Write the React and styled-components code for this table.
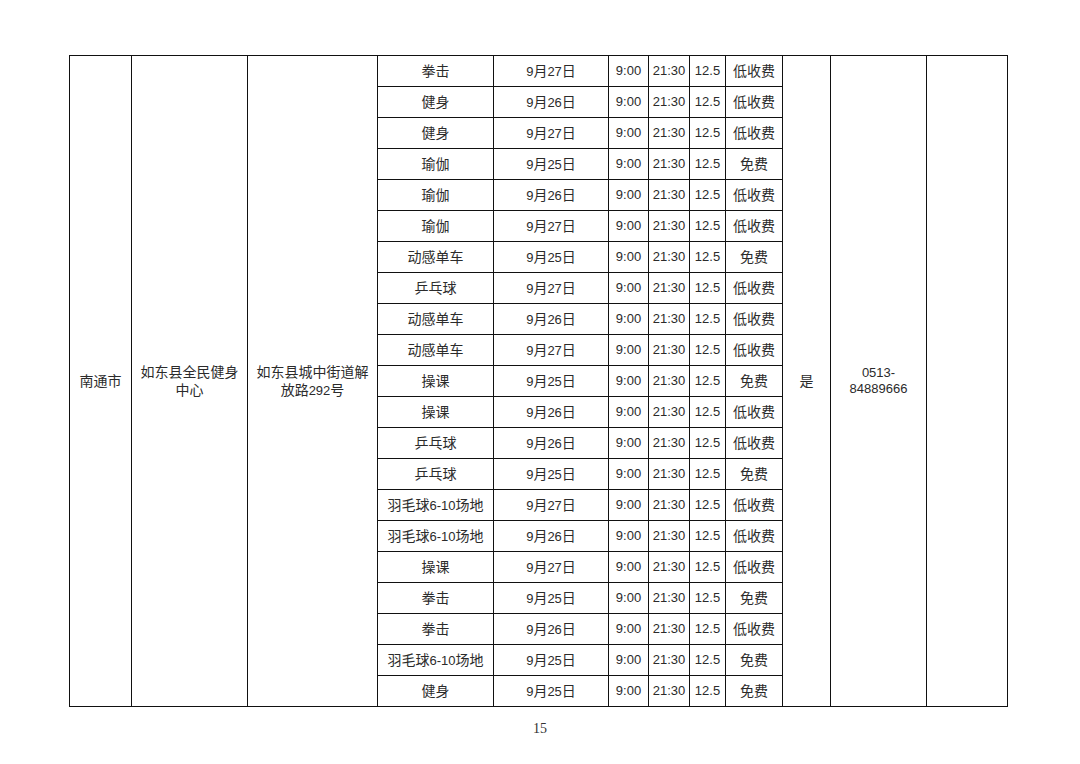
import React from "react";
import styled, { createGlobalStyle } from "styled-components";

const Global = createGlobalStyle`
  html, body { margin: 0; padding: 0; background: #fff; }
  body { width: 1080px; height: 764px; overflow: hidden; }
`;

const Page = styled.div`
  width: 1080px;
  height: 764px;
  padding-top: 55px;
  box-sizing: border-box;
  display: flex;
  flex-direction: column;
  align-items: flex-start;
`;

const Table = styled.table`
  margin-left: 69px;
  border-collapse: collapse;
  table-layout: fixed;
  width: 938px;
  font-family: "Liberation Sans", "Noto Sans CJK SC", sans-serif;
  font-size: 13px;
  color: #2b2b2b;
`;

const Row = styled.tr`
  height: 31px;
`;

const Cell = styled.td`
  border: 1px solid #111;
  padding: 0 2px;
  text-align: center;
  vertical-align: middle;
  line-height: 16px;
  white-space: nowrap;
  overflow: hidden;
`;

const Han = styled.span`
  font-family: "Noto Sans CJK SC", sans-serif;
  font-size: 14px;
`;

const PageNumber = styled.div`
  width: 100%;
  text-align: center;
  margin-top: 14px;
  font-family: "Liberation Serif", serif;
  font-size: 14px;
  color: #333;
`;

function T({ children }) {
  const parts = String(children).split(/([\u4e00-\u9fff]+)/);
  return parts.map((p, i) =>
    /[\u4e00-\u9fff]/.test(p) ? <Han key={i}>{p}</Han> : p ? <React.Fragment key={i}>{p}</React.Fragment> : null
  );
}

const widths = [62, 116, 130, 116, 115, 40, 41, 36, 57, 48, 96, 81];

const rows = [
  ["拳击", "9月27日", "低收费"],
  ["健身", "9月26日", "低收费"],
  ["健身", "9月27日", "低收费"],
  ["瑜伽", "9月25日", "免费"],
  ["瑜伽", "9月26日", "低收费"],
  ["瑜伽", "9月27日", "低收费"],
  ["动感单车", "9月25日", "免费"],
  ["乒乓球", "9月27日", "低收费"],
  ["动感单车", "9月26日", "低收费"],
  ["动感单车", "9月27日", "低收费"],
  ["操课", "9月25日", "免费"],
  ["操课", "9月26日", "低收费"],
  ["乒乓球", "9月26日", "低收费"],
  ["乒乓球", "9月25日", "免费"],
  ["羽毛球6-10场地", "9月27日", "低收费"],
  ["羽毛球6-10场地", "9月26日", "低收费"],
  ["操课", "9月27日", "低收费"],
  ["拳击", "9月25日", "免费"],
  ["拳击", "9月26日", "低收费"],
  ["羽毛球6-10场地", "9月25日", "免费"],
  ["健身", "9月25日", "免费"],
];

export default function App() {
  const n = rows.length;
  return (
    <Page>
      <Global />
      <Table>
        <colgroup>
          {widths.map((w, i) => (
            <col key={i} style={{ width: w }} />
          ))}
        </colgroup>
        <tbody>
          {rows.map((r, i) => (
            <Row key={i}>
              {i === 0 && (
                <>
                  <Cell rowSpan={n}><T>南通市</T></Cell>
                  <Cell rowSpan={n}>
                    <T>如东县全民健身</T>
                    <br />
                    <T>中心</T>
                  </Cell>
                  <Cell rowSpan={n}>
                    <T>如东县城中街道解</T>
                    <br />
                    <T>放路292号</T>
                  </Cell>
                </>
              )}
              <Cell><T>{r[0]}</T></Cell>
              <Cell><T>{r[1]}</T></Cell>
              <Cell>9:00</Cell>
              <Cell>21:30</Cell>
              <Cell>12.5</Cell>
              <Cell><T>{r[2]}</T></Cell>
              {i === 0 && (
                <>
                  <Cell rowSpan={n}><T>是</T></Cell>
                  <Cell rowSpan={n}>
                    0513-
                    <br />
                    84889666
                  </Cell>
                  <Cell rowSpan={n}></Cell>
                </>
              )}
            </Row>
          ))}
        </tbody>
      </Table>
      <PageNumber>15</PageNumber>
    </Page>
  );
}
